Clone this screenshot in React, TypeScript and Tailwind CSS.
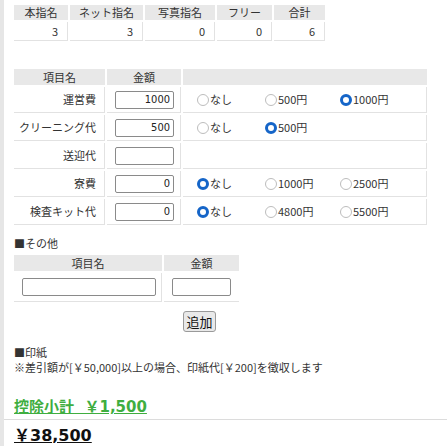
import React from "react";

const jp = "font-['Noto_Sans_CJK_JP','Noto_Sans',sans-serif]";

function Radio({ checked }: { checked?: boolean }) {
  return checked ? (
    <span className="inline-block w-[12px] h-[12px] rounded-full border-[3.5px] border-[#1565c8] bg-white mr-[1px] shrink-0" />
  ) : (
    <span className="inline-block w-[12px] h-[12px] rounded-full border border-[#bdbdbd] bg-white mr-[1px] shrink-0" />
  );
}

function NumInput({ value, w = "w-[59px]" }: { value?: string; w?: string }) {
  return (
    <div
      className={`${w} h-[18px] border border-[#8a8a8a] rounded-[2px] bg-white text-right pr-[3px] text-[11px] leading-[16px] text-[#222] font-['DejaVu_Sans_Condensed','DejaVu_Sans',sans-serif] [font-stretch:condensed]`}
    >
      {value}
    </div>
  );
}

type Opt = { label: string; checked?: boolean };

function FormRow({ label, value, opts }: { label: string; value?: string; opts: Opt[] }) {
  const widths = ["w-[68px]", "w-[75px]", "w-[75px]"];
  return (
    <div className="flex gap-[2px] h-[26px]">
      <div className="w-[91px] border-b border-r border-[#e2e2e2] flex items-center justify-end pr-[8px]">{label}</div>
      <div className="w-[74px] border-b border-r border-[#e2e2e2] flex items-center pl-[8px]">
        <NumInput value={value} />
      </div>
      <div className="w-[244px] border-b border-r border-[#e2e2e2] flex items-center pl-[14px]">
        {opts.map((o, i) => (
          <div key={i} className={`${widths[i]} flex items-center`}>
            <Radio checked={o.checked} />
            <span>{o.label}</span>
          </div>
        ))}
      </div>
    </div>
  );
}

export default function App() {
  const topCols = [
    { h: "本指名", v: "3", w: "w-[54px]" },
    { h: "ネット指名", v: "3", w: "w-[73px]" },
    { h: "写真指名", v: "0", w: "w-[70px]" },
    { h: "フリー", v: "0", w: "w-[55px]" },
    { h: "合計", v: "6", w: "w-[51px]" },
  ];
  return (
    <div className={`w-[447px] h-[446px] bg-white border-l-4 border-[#e6e6e6] text-[11px] text-[#333] ${jp} overflow-hidden`}>
      <div className="pl-[10px] pt-[5px]">
        {/* top summary table */}
        <div className="flex flex-col gap-[2px]">
          <div className="flex gap-[2px] h-[15px]">
            {topCols.map((c) => (
              <div key={c.h} className={`${c.w} bg-[#e8e8e8] flex items-center justify-center leading-none`}>{c.h}</div>
            ))}
          </div>
          <div className="flex gap-[2px] h-[19px]">
            {topCols.map((c) => (
              <div key={c.h} className={`${c.w} border-b border-r border-[#e2e2e2] flex items-center justify-end pr-[9px]`}>{c.v}</div>
            ))}
          </div>
        </div>

        {/* form table */}
        <div className="mt-[28px] flex flex-col gap-[2px]">
          <div className="flex gap-[2px] h-[16px]">
            <div className="w-[91px] bg-[#e8e8e8] flex items-center justify-center leading-none">項目名</div>
            <div className="w-[74px] bg-[#e8e8e8] flex items-center justify-center leading-none">金額</div>
            <div className="w-[244px] bg-[#e8e8e8]" />
          </div>
          <FormRow
            label="運営費"
            value="1000"
            opts={[{ label: "なし" }, { label: "500円" }, { label: "1000円", checked: true }]}
          />
          <FormRow label="クリーニング代" value="500" opts={[{ label: "なし" }, { label: "500円", checked: true }]} />
          <FormRow label="送迎代" opts={[]} />
          <FormRow
            label="寮費"
            value="0"
            opts={[{ label: "なし", checked: true }, { label: "1000円" }, { label: "2500円" }]}
          />
          <FormRow
            label="検査キット代"
            value="0"
            opts={[{ label: "なし", checked: true }, { label: "4800円" }, { label: "5500円" }]}
          />
        </div>

        {/* other */}
        <div className="mt-[10px] leading-[16px]">■その他</div>
        <div className="mt-[4px] flex flex-col gap-[2px]">
          <div className="flex gap-[2px] h-[16px]">
            <div className="w-[148px] bg-[#e8e8e8] flex items-center justify-center leading-none">項目名</div>
            <div className="w-[75px] bg-[#e8e8e8] flex items-center justify-center leading-none">金額</div>
          </div>
          <div className="flex gap-[2px] h-[29px]">
            <div className="w-[148px] border-b border-r border-[#e2e2e2] flex items-center pl-[8px]">
              <NumInput w="w-[134px]" />
            </div>
            <div className="w-[75px] border-b border-[#e2e2e2] flex items-center pl-[8px]">
              <NumInput w="w-[59px]" />
            </div>
          </div>
        </div>
        <div className="mt-[9px] pl-[169px]">
          <button className="w-[33px] h-[21px] bg-[#e9e9e9] border border-[#9a9a9a] rounded-[3px] text-[13px] leading-none text-[#111] flex items-center justify-center">
            追加
          </button>
        </div>

        {/* stamp */}
        <div className="mt-[13px] leading-[15px]">■印紙</div>
        <div className="leading-[15px]">※差引額が[￥50,000]以上の場合、印紙代[￥200]を徴収します</div>

        <div className="mt-[21px] text-[15px] font-bold text-[#3fae3f] underline leading-[20px] font-['DejaVu_Sans','Noto_Sans_CJK_JP',sans-serif]">
          <span className={jp}>控除小計</span>&nbsp;&nbsp;￥1,500
        </div>
      </div>
      <div className="mt-[2px] border-t border-[#dcdcdc]" />
      <div className="pl-[10px] mt-[6px] text-[16px] font-bold text-[#111] underline leading-[20px] font-['DejaVu_Sans','Noto_Sans_CJK_JP',sans-serif]">
        ￥38,500
      </div>
    </div>
  );
}
